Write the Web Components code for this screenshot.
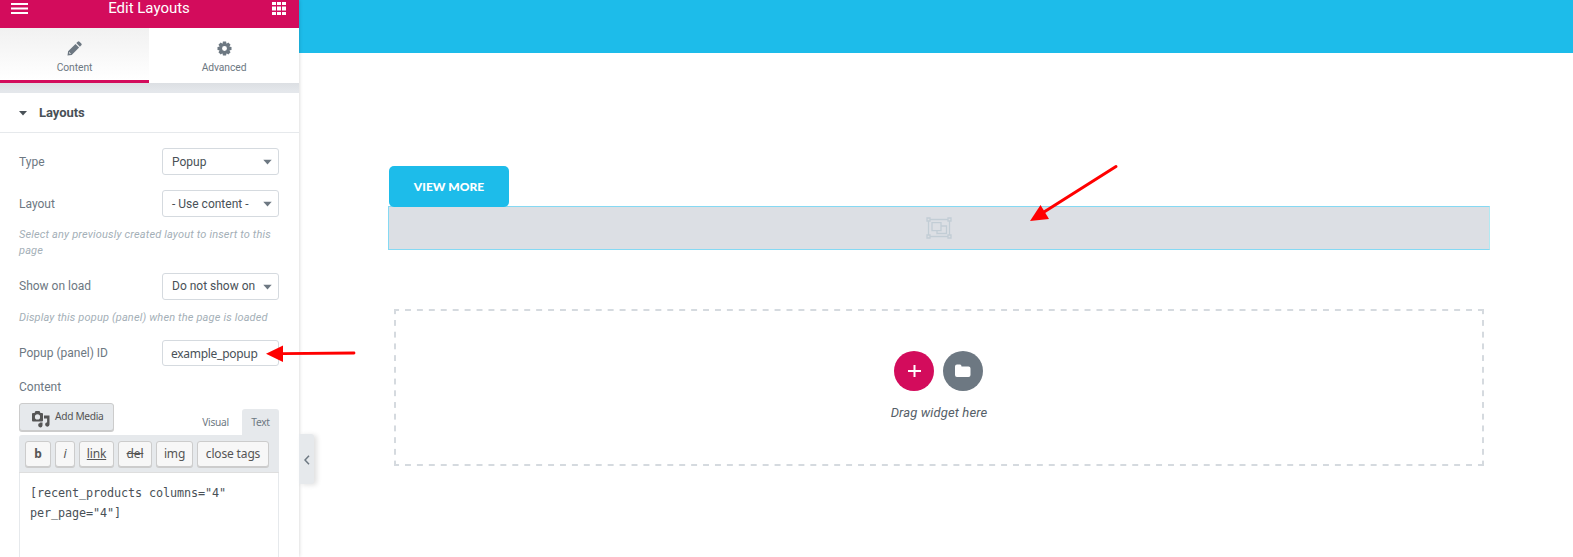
<!DOCTYPE html>
<html lang="en"><head><meta charset="utf-8"><title>Edit Layouts</title>
<style>html,body{margin:0;height:557px;overflow:hidden;background:#fff}body{font:13px/16px Roboto,"Liberation Sans",sans-serif}</style></head>
<body><layout-editor></layout-editor>
<script>
function define(name, html){
  customElements.define(name, class extends HTMLElement{
    constructor(){
      super();
      const t=document.createElement('template');
      t.innerHTML='<style>*{box-sizing:border-box}:host{display:block;box-sizing:border-box}</style>'+html;
      this.attachShadow({mode:'open'}).append(t.content.cloneNode(true));
    }
  });
}

define('panel-header', `<style>
:host{height:28px;background:#d30c5c;color:#fff;display:flex;justify-content:space-between;padding:0 13px 0 10.5px}
span{font-size:15px;line-height:16px;margin-left:-1.5px}svg{display:block}
</style>
<svg width="17" height="28" fill="#fff"><path d="M0 3h17v2H0zM0 7.500h17v2H0zM0 12h17v2H0z"/></svg>
<span><slot></slot></span>
<svg width="14" height="28" fill="#fff"><path d="M0 2h4v3H0zM5 2h4v3H5zM10 2h4v3h-4zM0 6.500h4v4H0zM5 6.500h4v4H5zM10 6.500h4v4h-4zM0 12h4v3H0zM5 12h4v3H5zM10 12h4v3h-4z"/></svg>`);

define('panel-tab', `<style>
:host{flex:1;height:55px;display:flex;flex-direction:column;align-items:center;padding-top:13px;color:#6d7882;font-size:10.3px;line-height:14px;letter-spacing:-.08px;background:#fff}
:host([active]){flex:0 0 149px;background:linear-gradient(#f1f1f1,#fff);border-bottom:3px solid #d30c5c}
::slotted(svg){display:block;margin-bottom:5px}
</style><slot name="icon"></slot><span><slot></slot></span>`);

define('section-title', `<style>
:host{height:40px;border-bottom:1px solid #e6e9ec;display:flex;align-items:center;padding-left:19px;font-size:13px;font-weight:700;letter-spacing:-.05px;color:#495157;background:#fff}
svg{margin-right:12px}</style><svg width="8" height="6"><path d="M0 1h8L4 5.400z" fill="#495157"/></svg><slot></slot>`);

define('control-row', `<style>
:host{display:flex;justify-content:space-between;align-items:center;color:#6d7882;font-size:12px;height:27px;padding:0 20px 0 19px}
:host([raised]) span{margin-top:-2px}
</style><span><slot></slot></span><slot name="field"></slot>`);

define('select-field', `<style>
:host{width:117px;height:27px;border:1px solid #d5dadf;border-radius:3px;display:flex;align-items:center;justify-content:space-between;padding:0 6px 0 9px;color:#495157;font-size:12px;white-space:nowrap}
:host([raised]) span{margin-top:-2px}
:host([input]){height:26px;padding:2px 0 0 8px;font-family:"Noto Sans",sans-serif;font-size:12px;letter-spacing:-.28px}
:host([input]) svg{display:none}
</style><span><slot></slot></span><svg width="9" height="6"><path d="M.3.8h8.400L4.500 5.400z" fill="#6d7882"/></svg>`);

define('hint-text', `<style>:host{font-size:11px;line-height:16px;font-style:italic;letter-spacing:.155px;color:#a4afb7;padding:0 20px 0 19px}</style><slot></slot>`);

define('quick-tag', `<style>:host{height:26px;border:1px solid #ccc;border-radius:3px;background:#f7f7f7;box-shadow:0 1px 0 #ccc;color:#555;font:12px/24px "Noto Sans",sans-serif;letter-spacing:-.15px;text-align:center;white-space:nowrap}</style><slot></slot>`);

define('text-editor', `<style>
:host{padding:0 20px 0 19px}
.top{display:flex;height:32px}
.media{width:95px;height:28px;background:#e6e9ec;border:1px solid #ccc;border-radius:3px;box-shadow:0 1px 0 #ccc;display:flex;padding:0 0 0 12px;font:10.200px/24px "Noto Sans",sans-serif;color:#555;white-space:nowrap;letter-spacing:-.32px}
.media svg{margin:7px 5px 0 0;flex:none}
.tab{height:26px;margin-top:6px;font:10.200px/27px "Noto Sans",sans-serif;letter-spacing:-.3px;color:#6d7882;text-align:center}
.visual{margin-left:auto;width:53px}.text{width:37px;background:#e6e9ec;border-radius:3px 3px 0 0}
.bar{height:38px;background:#e6e9ec;border-bottom:1px solid #dedede;border-radius:3px 0 0 0;display:flex;gap:4px;padding:6px}
.area{height:100px;border:1px solid #e6e9ec;border-top:0;padding:10px;font:11.800px/20px "DejaVu Sans Mono",monospace;letter-spacing:-.1px;color:#495157;white-space:pre}
</style>
<div class="top"><div class="media"><svg width="18" height="18" viewBox="0 0 18 18"><path fill="#555" fill-rule="evenodd" d="M0 3q0-1 1-1h1.500l1-2h4l1 2H10q1 0 1 1v6.500q0 1-1 1H1q-1 0-1-1zM5.500 3.300a2.600 2.600 0 1 0 0 5.200a2.600 2.600 0 1 0 0-5.200z"/><path fill="#555" d="M12 4.500H17.500v9a2.200 2.200 0 1 1-2.400-2.200V7.500H12zM7.500 11.500h3v3A2.200 2.200 0 1 1 8.300 12z"/></svg>Add Media</div><div class="tab visual">Visual</div><div class="tab text">Text</div></div>
<div class="bar"><quick-tag style="width:26px"><b>b</b></quick-tag><quick-tag style="width:20px"><i>i</i></quick-tag><quick-tag style="width:35px"><u>link</u></quick-tag><quick-tag style="width:34px"><s>del</s></quick-tag><quick-tag style="width:37px">img</quick-tag><quick-tag style="width:72px">close tags</quick-tag></div>
<div class="area"><slot></slot></div>`);

define('side-panel', `<style>
:host{width:299px;height:557px;background:#fff;box-shadow:0 0 4px rgba(0,0,0,.2);position:relative;z-index:2}
.tabs{display:flex}.gap{height:10px;background:linear-gradient(#dcdfe3,#e4e7eb 8px)}
.controls{padding-top:15px}
.fold{position:absolute;left:299px;top:434px;width:15px;height:50px;background:#e6e9ec;border-radius:0 3px 3px 0;box-shadow:3px 1px 5px rgba(0,0,0,.12);display:flex;align-items:center;justify-content:center;padding:2px 0 0 1px}
</style>
<panel-header>Edit Layouts</panel-header>
<div class="tabs">
<panel-tab active><svg slot="icon" width="15" height="15" viewBox="0 0 15 15"><path fill="#6d7882" fill-rule="evenodd" d="M.5 14.500L1.100 10.300 8.500 2.900 12.100 6.500 4.700 13.900zM2 12l1 1 .9-.3-1.600-1.600zM9.300 2.100L10.700.7q.9-.8 1.800 0l1.800 1.800q.8.900 0 1.800l-1.400 1.400z"/></svg>Content</panel-tab>
<panel-tab><svg slot="icon" width="15" height="15" viewBox="-7.500 -7.500 15 15"><g fill="#6d7882"><path d="M-1.600-7h3.200l.5 3h-4.200zM-1.600 7h3.200l.5-3h-4.200z"/><path transform="rotate(45)" d="M-1.600-7h3.200l.5 3h-4.200zM-1.600 7h3.200l.5-3h-4.200z"/><path transform="rotate(90)" d="M-1.600-7h3.200l.5 3h-4.200zM-1.600 7h3.200l.5-3h-4.200z"/><path transform="rotate(135)" d="M-1.600-7h3.200l.5 3h-4.200zM-1.600 7h3.200l.5-3h-4.200z"/></g><circle r="3.900" fill="none" stroke="#6d7882" stroke-width="2.900"/></svg>Advanced</panel-tab>
</div><div class="gap"></div>
<section-title>Layouts</section-title>
<div class="controls">
<control-row>Type<select-field slot="field">Popup</select-field></control-row>
<control-row style="margin-top:15px">Layout<select-field slot="field">- Use content -</select-field></control-row>
<hint-text style="margin-top:10px">Select any previously created layout to insert to this page</hint-text>
<control-row raised style="margin-top:14px">Show on load<select-field raised slot="field">Do not show on</select-field></control-row>
<hint-text style="margin-top:10px">Display this popup (panel) when the page is loaded</hint-text>
<control-row style="margin-top:14px;height:26px">Popup (panel) ID<select-field input slot="field">example_popup</select-field></control-row>
<control-row style="margin-top:7px">Content</control-row>
</div>
<text-editor style="margin-top:3px">[recent_products columns="4"
per_page="4"]</text-editor>
<div class="fold"><svg width="6" height="10"><path d="M5 .8L1 5l4 4.200" fill="none" stroke="#6d7882" stroke-width="1.500"/></svg></div>`);

define('cta-button', `<style>:host{width:120px;height:41px;margin-left:1px;background:#1dbcea;border-radius:5px;color:#fff;font:900 12px/41px Lato,sans-serif;text-align:center;position:relative;z-index:1}</style><slot></slot>`);
define('empty-widget', `<style>:host{width:1102px;height:44px;margin-top:-1px;background:#dcdfe4;border:1px solid #85d9f3;border-right-color:#b3e9f2;display:flex;align-items:center;justify-content:center}</style>
<svg width="26" height="22" fill="none" stroke="#c2cdd5" stroke-width="1.300"><path d="M4 2.500h18M4 19.500h18M2.500 4v14M23.500 4v14"/><path d="M1 1h3v3H1zM22 1h3v3h-3zM1 18h3v3H1zM22 18h3v3h-3z"/><path d="M6 5.700h9v8H6zM15 9h5.500v7.500H11v-2.800"/></svg>`);
define('round-button', `<style>:host{width:40px;height:40px;border-radius:50%;background:var(--fill);display:flex;align-items:center;justify-content:center}</style><slot></slot>`);
define('drop-zone', `<style>:host{--h:linear-gradient(90deg,#d5dadf 6px,transparent 6px);--v:linear-gradient(#d5dadf 6px,transparent 6px);width:1090px;height:157px;margin:59px 0 0 6px;padding-top:42px;
background:var(--h) -.93px 0/11.933px 2px repeat-x,var(--h) -.93px 100%/11.933px 2px repeat-x,var(--v) 0 -.73px/2px 11.730px repeat-y,var(--v) 100% -.73px/2px 11.730px repeat-y}
.buttons{display:flex;justify-content:center;gap:9px;padding-right:1px}p{margin:13px 0 0;text-align:center;font:italic 13px/17px Roboto,sans-serif;letter-spacing:.12px;color:#556068}</style>
<div class="buttons"><round-button style="--fill:#d30c5c"><svg width="14" height="14"><path d="M7.500 1v12M1 7h13" stroke="#fff" stroke-width="2"/></svg></round-button><round-button style="--fill:#6d7882"><svg width="16" height="14"><path fill="#fff" d="M0 2.500Q0 .5 2 .5h3q1.500 0 1.500 2h7q2 0 2 2V11q0 2-2 2H2q-2 0-2-2z"/></svg></round-button></div><p><slot></slot></p>`);
define('page-canvas', `<style>:host{flex:1}.banner{height:53px;background:#1dbcea}.content{padding:113px 0 0 89px}</style>
<div class="banner"></div><div class="content"><cta-button>VIEW MORE</cta-button><empty-widget></empty-widget><drop-zone>Drag widget here</drop-zone></div>`);
define('callout-arrows', `<style>:host{position:absolute;inset:0;z-index:5}svg{display:block}</style>
<svg width="1573" height="557"><g fill="red"><path d="M266 353.700L283 345.500V362z"/><path d="M1030 221l10.500-16 8.500 14z"/></g><g stroke="red" stroke-width="3" stroke-linecap="round"><path d="M282 353.700l72-.7" stroke-width="2.800"/><path d="M1044 212l72-45.500"/></g></svg>`);
define('layout-editor', `<style>:host{display:flex;position:relative;width:1573px;height:557px;overflow:hidden}</style><side-panel></side-panel><page-canvas></page-canvas><callout-arrows></callout-arrows>`);
</script></body></html>
